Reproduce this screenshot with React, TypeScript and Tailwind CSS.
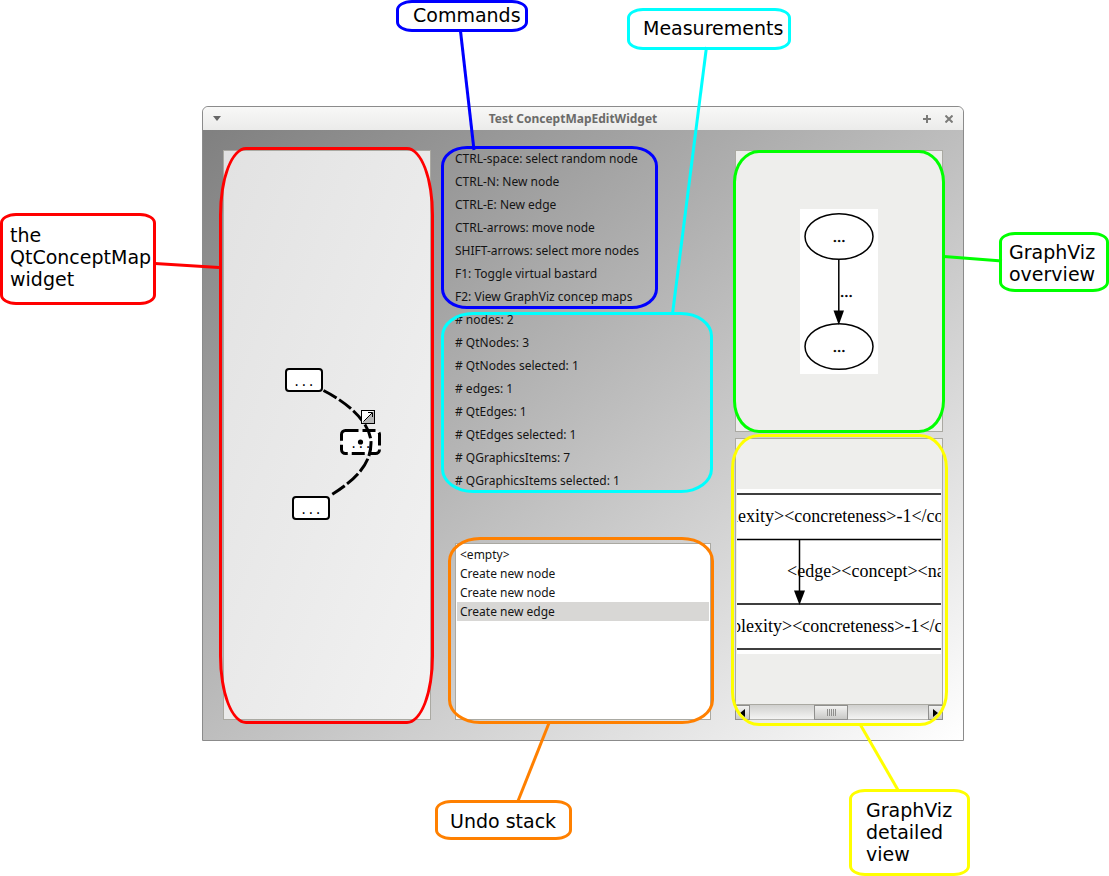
import React from "react";

const commands = [
  "CTRL-space: select random node",
  "CTRL-N: New node",
  "CTRL-E: New edge",
  "CTRL-arrows: move node",
  "SHIFT-arrows: select more nodes",
  "F1: Toggle virtual bastard",
  "F2: View GraphViz concep maps",
];

const measurements = [
  "# nodes: 2",
  "# QtNodes: 3",
  "# QtNodes selected: 1",
  "# edges: 1",
  "# QtEdges: 1",
  "# QtEdges selected: 1",
  "# QGraphicsItems: 7",
  "# QGraphicsItems selected: 1",
];

const undoStack = ["<empty>", "Create new node", "Create new node", "Create new edge"];

/* Coloured outline drawn over a part of the window. */
function Outline({ className }: { className: string }) {
  return <span aria-hidden="true" className={`pointer-events-none absolute z-10 border-3 ${className}`} />;
}

function Callout({ className, children }: { className: string; children: React.ReactNode }) {
  return (
    <p
      className={`absolute z-20 flex flex-col justify-center rounded-[16px/10px] border-3 bg-white text-[19px] leading-[22px] whitespace-pre ${className}`}
    >
      {children}
    </p>
  );
}

function Lines({ items }: { items: string[] }) {
  return (
    <ul className="flex flex-col gap-1.5">
      {items.map((item) => (
        <li key={item} className="leading-[17px] whitespace-nowrap">
          {item}
        </li>
      ))}
    </ul>
  );
}

function ConceptMap() {
  return (
    <svg width="206" height="200" viewBox="224 335 206 200" role="img" aria-label="Concept map">
      <g fill="#fff" stroke="#000" strokeWidth="2">
        <rect x="286" y="369" width="36" height="22" rx="3" />
        <rect x="293" y="497" width="36" height="22" rx="3" />
        <rect x="341.5" y="430.5" width="38" height="23" rx="4" strokeWidth="3" strokeDasharray="13 4" />
      </g>
      <g fontFamily="DejaVu Sans Mono, monospace" fontSize="12" fill="#000">
        <text x="293" y="386">...</text>
        <text x="300" y="514">...</text>
        <text x="350" y="448">...</text>
      </g>
      <path
        d="M323.500 390.500C350 404 371 424 371 443C371 463 357 479 331 495"
        fill="none"
        stroke="#000"
        strokeWidth="3"
        strokeDasharray="15 3"
      />
      <circle cx="360.500" cy="442" r="2.600" />
      <rect x="361.500" y="410.500" width="13" height="13" fill="#fff" stroke="#000" />
      <path d="M374 411V423H362Z" fill="#b8b8b8" />
      <path d="M363.500 421.500L372 413M368 412.500H372.500V417" fill="none" stroke="#000" />
    </svg>
  );
}

function Overview() {
  return (
    <svg width="78" height="165" viewBox="0 0 78 165" className="bg-white" role="img" aria-label="GraphViz overview graph">
      <g fill="none" stroke="#000" strokeWidth="1.500">
        <ellipse cx="39" cy="27.500" rx="34" ry="22.800" />
        <ellipse cx="39" cy="137.500" rx="34" ry="22.800" />
        <path d="M38.800 50V103" />
      </g>
      <path d="M33.500 101.500H44L38.800 116Z" />
      <g fontFamily="Liberation Serif, serif" fontSize="17" fill="#000" stroke="#000" strokeWidth="0.400">
        <text x="39" y="33" textAnchor="middle">...</text>
        <text x="40" y="88">...</text>
        <text x="39" y="143" textAnchor="middle">...</text>
      </g>
    </svg>
  );
}

function Detail() {
  return (
    <svg width="100%" height="165" className="block bg-white" role="img" aria-label="GraphViz detailed graph">
      <g stroke="#000" strokeWidth="1.700">
        <path d="M0 5H1000M0 50.500H1000M0 115H1000M0 160H1000" />
        <path d="M62.500 50V104" strokeWidth="1.500" />
      </g>
      <path d="M57 101.500H68L62.500 116Z" />
      <g fontFamily="Liberation Serif, serif" fontSize="18" fill="#000">
        <text x="-4" y="33">{"lexity><concreteness>-1</con"}</text>
        <text x="50" y="88">{"<edge><concept><nam"}</text>
        <text x="-5" y="143">{"plexity><concreteness>-1</co"}</text>
      </g>
    </svg>
  );
}

function ScrollBar() {
  const part = "flex h-[15px] items-center justify-center border border-[#8f8f8d] bg-linear-to-b from-[#f2f2f1] to-[#c9c9c7]";
  return (
    <div className="flex h-[15px] border-b border-[#b4b4b0] bg-linear-to-b from-[#d0d0ce] to-[#f4f4f3]">
      <button aria-label="Scroll left" className={`w-[15px] ${part}`}>
        <svg width="5" height="8" viewBox="0 0 5 8"><path d="M5 0V8L0 4Z" /></svg>
      </button>
      <span className="grow" />
      <span className={`w-[34px] gap-px ${part}`}>
        {[0, 1, 2, 3, 4].map((i) => (
          <i key={i} className="h-[7px] w-px bg-[#8f8f8d]" />
        ))}
      </span>
      <span className="grow-[1.25]" />
      <button aria-label="Scroll right" className={`w-[15px] ${part}`}>
        <svg width="5" height="8" viewBox="0 0 5 8"><path d="M0 0V8L5 4Z" /></svg>
      </button>
    </div>
  );
}

function Connectors() {
  return (
    <svg aria-hidden="true" className="pointer-events-none absolute top-0 left-0 z-20 h-[876px] w-full" fill="none" strokeWidth="3">
      <path d="M460.500 31L474 150" stroke="#00f" />
      <path d="M706.500 47L672.500 314" stroke="#0ff" />
      <path d="M155 263.500L219 267.500" stroke="#f00" />
      <path d="M944 256.500L1002 261" stroke="#0f0" />
      <path d="M549 723L518 801" stroke="#ff8000" />
      <path d="M860.500 725L898 790" stroke="#ff0" />
    </svg>
  );
}

export default function App() {
  return (
    <main className="relative min-h-screen overflow-hidden bg-white pt-[106px] pr-[145px] pb-[135px] pl-[202px] font-['DejaVu_Sans',sans-serif] text-black">
      <section className="rounded-t-md border border-[#8b8b8b] font-['Noto_Sans',sans-serif] text-[12px] text-[#141414]">
        <header className="flex h-[23px] items-center rounded-t-md bg-linear-to-b from-[#f8f8f7] to-[#ebebea] px-2.5 text-[#6b6b69]">
          <button aria-label="Window menu" className="flex w-11">
            <svg width="8" height="5" viewBox="0 0 8 5"><path d="M0 0H8L4 5Z" fill="#666" /></svg>
          </button>
          <h1 className="grow text-center text-[12px] leading-[17px] font-bold text-[#6b6b69]">Test ConceptMapEditWidget</h1>
          <div className="flex w-16 justify-end gap-3.5">
            <button aria-label="Maximize">
              <svg width="8" height="8" viewBox="0 0 8 8"><path d="M4 0V8M0 4H8" stroke="#7b7b79" strokeWidth="2" /></svg>
            </button>
            <button aria-label="Close">
              <svg width="8" height="8" viewBox="0 0 8 8"><path d="M.5.5L7.500 7.500M7.500.5L.5 7.500" stroke="#7b7b79" strokeWidth="2" /></svg>
            </button>
          </div>
        </header>

        <div className="grid grid-cols-[13fr_16fr_13fr] gap-6 bg-linear-to-br from-[#808080] to-white p-5">
          <div className="relative flex items-center justify-center border border-[#aaa9a2] bg-linear-to-br from-[#e2e2e2] to-[#f2f2f2]">
            <ConceptMap />
            <Outline className="-top-1 -right-1 -bottom-[5px] -left-[5px] rounded-[27px/68px] border-[#f00]" />
          </div>

          <div className="flex min-w-0 flex-col">
            <div className="relative">
              <Lines items={commands} />
              <Outline className="-top-1 right-[53px] -bottom-1 -left-[14px] rounded-[26px/20px] border-[#00f]" />
            </div>
            <div className="relative mt-1.5">
              <Lines items={measurements} />
              <Outline className="top-px -right-[2px] -bottom-1 -left-[14px] rounded-[32px/24px] border-[#0ff]" />
            </div>
            <div className="relative mt-[54px] grow border border-[#aaa9a2] bg-white p-px">
              <ul>
                {undoStack.map((entry, i) => (
                  <li
                    key={i}
                    className={`px-[3px] leading-[19px] ${i === undoStack.length - 1 ? "bg-[#d8d7d5]" : ""}`}
                  >
                    {entry}
                  </li>
                ))}
              </ul>
              <Outline className="-top-[7px] -right-1 -bottom-[5px] -left-2 rounded-[32px/24px] border-[#ff8000]" />
            </div>
          </div>

          <div className="flex min-w-0 flex-col gap-1.5">
            <div className="relative flex min-h-[282px] items-center justify-center border border-[#aaa9a2] bg-[#eeeeec]">
              <Overview />
              <Outline className="-top-px -right-[3px] -bottom-[2px] -left-[3px] rounded-[26px/32px] border-[#0f0]" />
            </div>
            <div className="relative flex min-h-[282px] flex-col">
              <div className="flex grow flex-col justify-center border border-[#aaa9a2] bg-[#eeeeec] px-px">
                <Detail />
              </div>
              <ScrollBar />
              <Outline className="-top-1 -right-[5px] -bottom-[6px] -left-1 rounded-[28px/34px] border-[#ff0]" />
            </div>
          </div>
        </div>
      </section>

      <Callout className="top-0 left-[396px] h-8 w-[132px] border-[#00f] pb-0.5 pl-3.5">Commands</Callout>
      <Callout className="top-2 left-[627px] h-[42px] w-[164px] border-[#0ff] pb-0.5 pl-[13px]">Measurements</Callout>
      <Callout className="top-[213px] left-0 h-[92px] w-[156px] border-[#f00] pb-1 pl-[7px]">{"the\nQtConceptMap\nwidget"}</Callout>
      <Callout className="top-[232px] right-0 h-[60px] w-[110px] border-[#0f0] pt-0.5 pl-[7px]">{"GraphViz\noverview"}</Callout>
      <Callout className="top-[800px] left-[435px] h-10 w-[137px] border-[#ff8000] pt-0.5 pl-3">Undo stack</Callout>
      <Callout className="top-[789px] right-[139px] h-[87px] w-[121px] border-[#ff0] pb-0.5 pl-3.5">{"GraphViz\ndetailed\nview"}</Callout>
      <Connectors />
    </main>
  );
}
